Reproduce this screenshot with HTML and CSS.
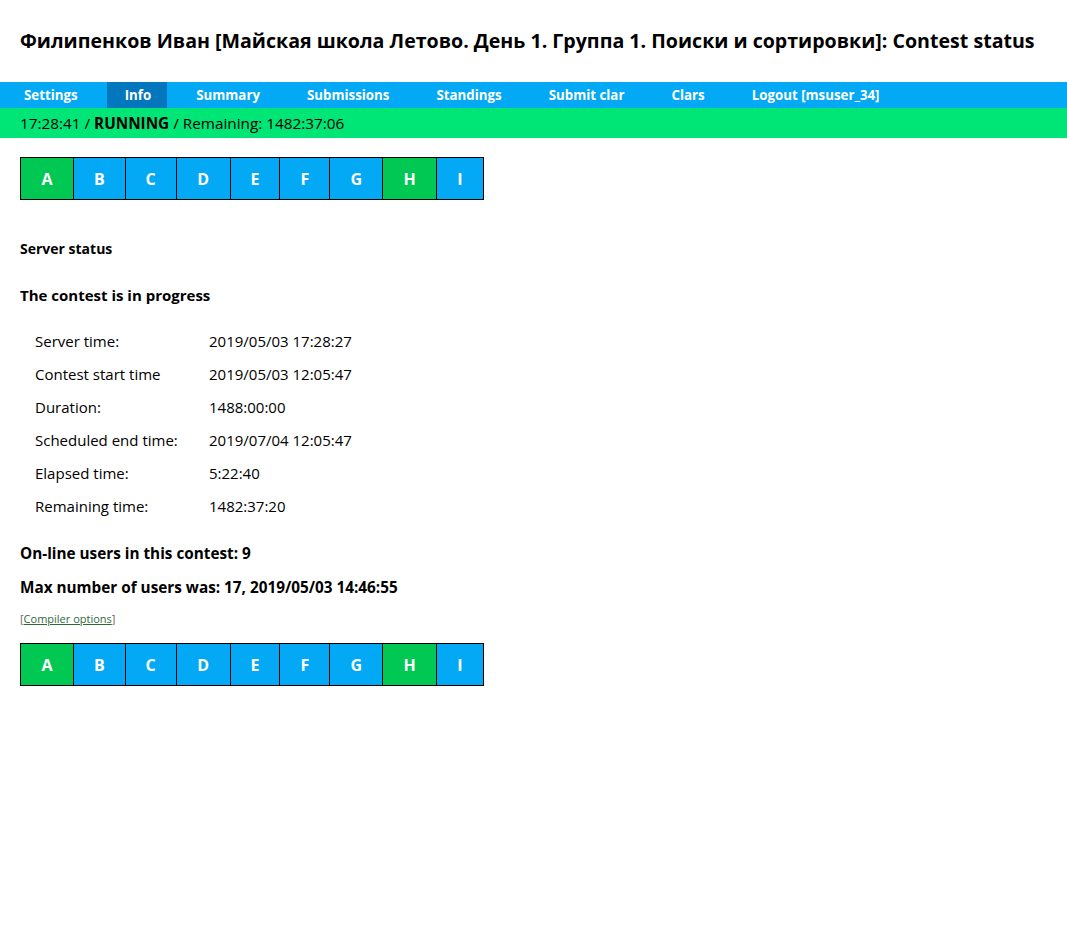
FILE: index.html
```html
<!DOCTYPE html>
<html lang="ru">
<head>
    <meta charset="UTF-8">
    <title>Contest status</title>
    <link rel="stylesheet" href="styles.css">
</head>
<body>
    <h1 class="titulo">Филипенков Иван [Майская школа Летово. День 1. Группа 1. Поиски и сортировки]: Contest status</h1>

    <div class="menu">
        <a href="#" class="menu-item">Settings</a>
        <a href="#" class="menu-item activo">Info</a>
        <a href="#" class="menu-item">Summary</a>
        <a href="#" class="menu-item">Submissions</a>
        <a href="#" class="menu-item">Standings</a>
        <a href="#" class="menu-item">Submit clar</a>
        <a href="#" class="menu-item">Clars</a>
        <a href="#" class="menu-item">Logout [msuser_34]</a>
    </div>
    <div class="estado">17:28:41 / <b>RUNNING</b> / Remaining: 1482:37:06</div>

    <div class="contenido">
        <table class="problemas">
            <tr>
                <td class="ok">A</td><td>B</td><td>C</td><td>D</td><td>E</td><td>F</td><td>G</td><td class="ok">H</td><td>I</td>
            </tr>
        </table>

        <h3 class="server">Server status</h3>
        <h3 class="progreso">The contest is in progress</h3>

        <table class="info">
            <tr><td>Server time:</td><td>2019/05/03 17:28:27</td></tr>
            <tr><td>Contest start time</td><td>2019/05/03 12:05:47</td></tr>
            <tr><td>Duration:</td><td>1488:00:00</td></tr>
            <tr><td>Scheduled end time:</td><td>2019/07/04 12:05:47</td></tr>
            <tr><td>Elapsed time:</td><td>5:22:40</td></tr>
            <tr><td>Remaining time:</td><td>1482:37:20</td></tr>
        </table>

        <p class="usuarios">On-line users in this contest: 9</p>
        <p class="usuarios">Max number of users was: 17, 2019/05/03 14:46:55</p>

        <p class="opciones">[<a href="#">Compiler options</a>]</p>

        <table class="problemas">
            <tr>
                <td class="ok">A</td><td>B</td><td>C</td><td>D</td><td>E</td><td>F</td><td>G</td><td class="ok">H</td><td>I</td>
            </tr>
        </table>
    </div>
</body>
</html>
```

FILE: styles.css
```css
html, body {
    margin: 0;
    padding: 0;
}

body {
    font-family: "Open Sans", "Noto Sans", sans-serif;
    color: #000;
    background: #fff;
}

.titulo {
    font-size: 19.6px;
    font-weight: bold;
    margin: 0;
    padding: 29px 20px 29px 20px;
    line-height: 24px;
    white-space: nowrap;
}

.menu {
    display: flex;
    gap: 11px;
    background-color: #03a9f4;
    height: 26px;
    padding-left: 6px;
}

.menu-item {
    display: block;
    padding: 0 18px;
    line-height: 26px;
    font-size: 13.3px;
    font-weight: bold;
    color: #fff;
    text-decoration: none;
}

.menu-item.activo {
    background-color: #0277bd;
    padding-right: 16px;
}

.estado {
    background-color: #00e676;
    height: 30px;
    line-height: 31px;
    padding-left: 20px;
    font-size: 15.3px;
}

.contenido {
    padding: 19px 20px;
}

.problemas {
    border-collapse: collapse;
    border: 1px solid #000;
    width: 464px;
}

.problemas td {
    border: 1px solid #000;
    background-color: #03a9f4;
    color: #fff;
    font-weight: bold;
    font-size: 16px;
    text-align: center;
    height: 41px;
    padding: 0;
}

.problemas td:nth-child(1) { width: 52px; }
.problemas td:nth-child(2) { width: 51px; }
.problemas td:nth-child(3) { width: 50px; }
.problemas td:nth-child(4) { width: 53px; }
.problemas td:nth-child(5) { width: 49px; }
.problemas td:nth-child(6) { width: 49px; }
.problemas td:nth-child(7) { width: 52px; }
.problemas td:nth-child(8) { width: 53px; }
.problemas td:nth-child(9) { width: 46px; }

.problemas td.ok {
    background-color: #00c853;
}

.server {
    font-size: 14px;
    margin: 39px 0 0 0;
    line-height: 20px;
}

.progreso {
    font-size: 15px;
    margin: 25px 0 0 0;
    line-height: 22px;
}

.info {
    border-collapse: collapse;
    margin: 18px 0 0 4px;
    font-size: 15px;
}

.info td {
    padding: 0 11px;
    height: 33px;
}

.info td:first-child {
    width: 152px;
}

.usuarios {
    font-size: 15.3px;
    font-weight: bold;
    margin: 19px 0 0 0;
    line-height: 25px;
}

.usuarios + .usuarios {
    margin-top: 9px;
}

.opciones {
    font-size: 11px;
    color: #666;
    margin: 11px 0 17px 0;
}

.opciones a {
    color: #2e6b36;
}
```
